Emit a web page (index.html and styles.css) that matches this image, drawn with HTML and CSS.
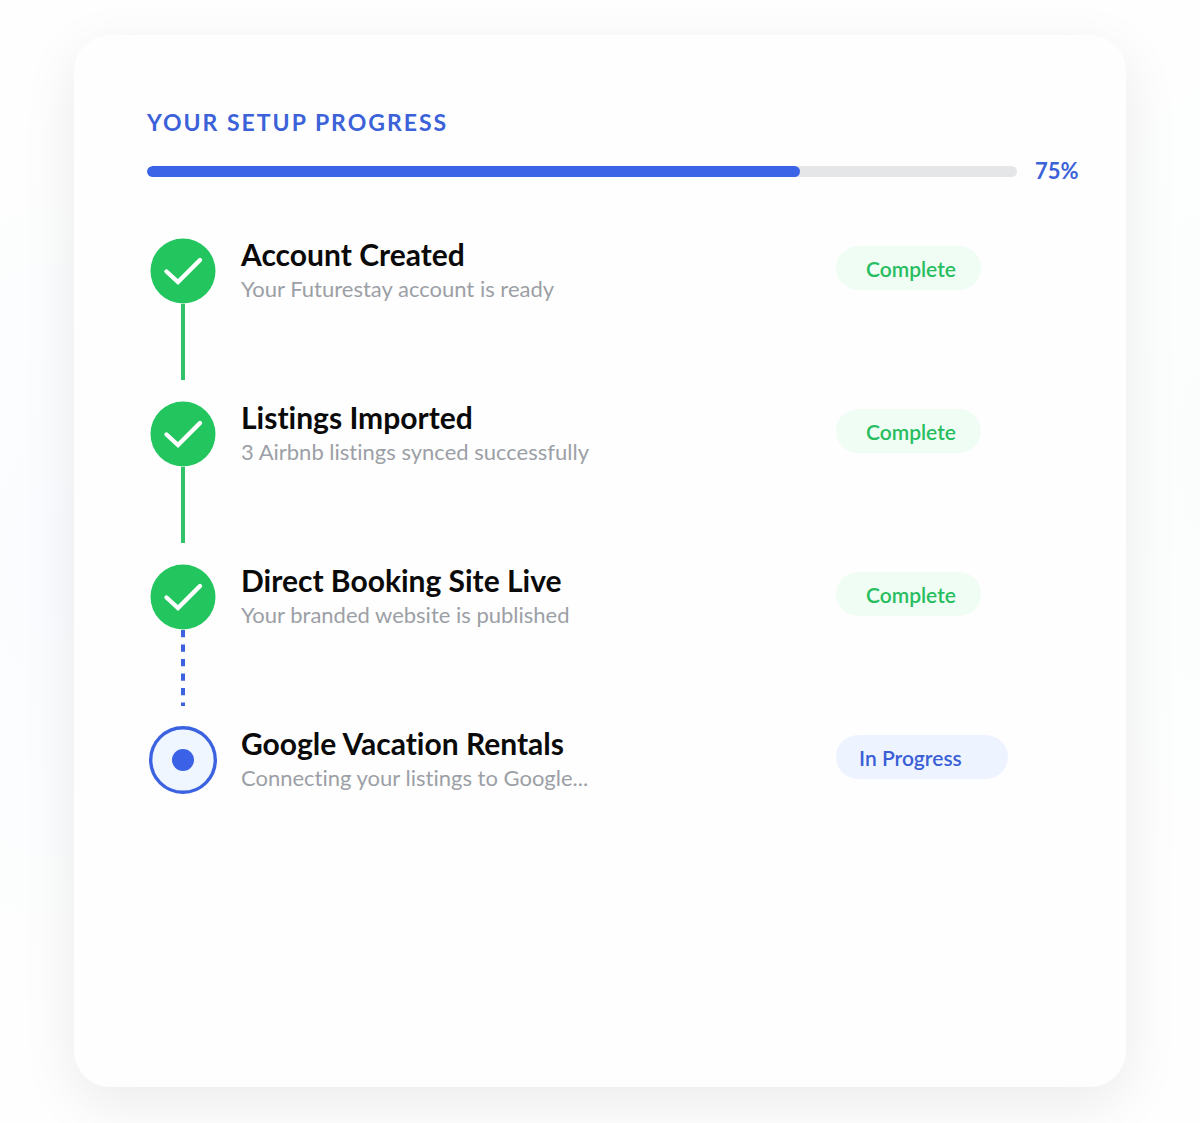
FILE: index.html
```html
<!DOCTYPE html>
<html lang="en">
<head>
    <meta charset="UTF-8">
    <meta name="viewport" content="width=device-width, initial-scale=1.0">
    <title>Your Setup Progress</title>
    <link rel="stylesheet" href="styles.css">
</head>
<body>
    <main class="card">
        <label class="card-title" for="setup-progress">Your Setup Progress</label>
        <div class="progress-row">
            <progress id="setup-progress" class="progress-bar" value="75" max="100"></progress>
            <span class="progress-value">75%</span>
        </div>

        <ol class="steps">
            <li class="step">
                <div class="rail">
                    <svg class="marker" viewBox="0 0 72 68" aria-hidden="true">
                        <circle cx="36" cy="34" r="32.5" fill="#22c55e"/>
                        <path d="M19.5 34.5 31 45 53 23" fill="none" stroke="#fff" stroke-width="4.4" stroke-linecap="round"/>
                    </svg>
                    <div class="line"></div>
                </div>
                <div class="info">
                    <h2 class="name">Account Created</h2>
                    <p class="desc">Your Futurestay account is ready</p>
                </div>
                <span class="badge badge-done">Complete</span>
            </li>
            <li class="step">
                <div class="rail">
                    <svg class="marker" viewBox="0 0 72 68" aria-hidden="true">
                        <circle cx="36" cy="34" r="32.5" fill="#22c55e"/>
                        <path d="M19.5 34.5 31 45 53 23" fill="none" stroke="#fff" stroke-width="4.4" stroke-linecap="round"/>
                    </svg>
                    <div class="line"></div>
                </div>
                <div class="info">
                    <h2 class="name">Listings Imported</h2>
                    <p class="desc">3 Airbnb listings synced successfully</p>
                </div>
                <span class="badge badge-done">Complete</span>
            </li>
            <li class="step">
                <div class="rail">
                    <svg class="marker" viewBox="0 0 72 68" aria-hidden="true">
                        <circle cx="36" cy="34" r="32.5" fill="#22c55e"/>
                        <path d="M19.5 34.5 31 45 53 23" fill="none" stroke="#fff" stroke-width="4.4" stroke-linecap="round"/>
                    </svg>
                    <svg class="dashes" viewBox="0 0 4 76" aria-hidden="true">
                        <path d="M2 0V76" stroke="#3b62e0" stroke-width="4" stroke-dasharray="7.2 7.3"/>
                    </svg>
                </div>
                <div class="info">
                    <h2 class="name">Direct Booking Site Live</h2>
                    <p class="desc">Your branded website is published</p>
                </div>
                <span class="badge badge-done">Complete</span>
            </li>
            <li class="step">
                <div class="rail">
                    <svg class="marker" viewBox="0 0 72 68" aria-hidden="true">
                        <circle cx="36" cy="34" r="32.3" fill="#eff6ff" stroke="#3b62e0" stroke-width="3.4"/>
                        <circle cx="36" cy="34" r="11" fill="#3b62e6"/>
                    </svg>
                </div>
                <div class="info">
                    <h2 class="name">Google Vacation Rentals</h2>
                    <p class="desc">Connecting your listings to Google...</p>
                </div>
                <span class="badge badge-active">In Progress</span>
            </li>
        </ol>
    </main>
</body>
</html>
```
FILE: styles.css
```css
*{
    margin:0;
    padding:0;
    box-sizing:border-box;
}
body{
    min-height:100vh;
    padding:35px 74px 36px;
    display:flex;
    background:
        radial-gradient(ellipse 20% 42% at 4% 50%, #fafcff, transparent),
        radial-gradient(ellipse 12% 42% at 100% 40%, #fbfdfd, transparent),
        #fefefe;
    color:#0a0a0a;
    font-family:Lato, "Open Sans", sans-serif;
    font-variant-ligatures:none;
}
.card{
    flex:1;
    padding:72px 49px 72px 73px;
    background:#fefefe;
    border-radius:36px;
    box-shadow:0 16px 56px rgba(0,0,0,.08);
}
.card-title{
    display:block;
    color:#3b62d9;
    font-size:23px;
    font-weight:700;
    line-height:30px;
    letter-spacing:2px;
    text-transform:uppercase;
}
.progress-row{
    display:flex;
    align-items:center;
    gap:18px;
    margin-top:20px;
}
.progress-bar{
    flex:1;
    min-width:0;
    height:11px;
    appearance:none;
    -webkit-appearance:none;
    border:none;
    border-radius:6px;
    background:#e5e6e8;
    overflow:hidden;
}
.progress-bar::-webkit-progress-bar{
    background:#e5e6e8;
}
.progress-bar::-webkit-progress-value{
    background:#3b64e6;
    border-radius:6px;
}
.progress-value{
    width:42px;
    color:#3b62d9;
    font-size:22px;
    font-weight:700;
    line-height:28px;
    white-space:nowrap;
}
.steps{
    margin-top:52px;
    list-style:none;
}
.step{
    display:grid;
    grid-template-columns:72px 1fr 241px;
    column-gap:22px;
    align-items:start;
    min-height:163px;
}
.rail{
    display:flex;
    flex-direction:column;
    align-items:center;
}
.marker{
    width:72px;
    height:68px;
}
.line,
.dashes{
    width:4px;
    height:76px;
    margin-top:-1px;
}
.line{
    background:#2fc466;
}
.name{
    font-size:30px;
    font-weight:700;
    line-height:34px;
}
.desc{
    color:#9ca0a6;
    font-size:22px;
    line-height:36px;
}
.badge{
    justify-self:start;
    margin-top:9px;
    padding-top:2px;
    border-radius:22px;
    font-size:21px;
    font-weight:600;
    line-height:42px;
    white-space:nowrap;
}
.badge-done{
    padding-left:30px;
    padding-right:25px;
    background:#f0fdf4;
    color:#27bd60;
}
.badge-active{
    padding-left:23px;
    padding-right:46px;
    background:#eef4ff;
    color:#3b5fd6;
}
```
